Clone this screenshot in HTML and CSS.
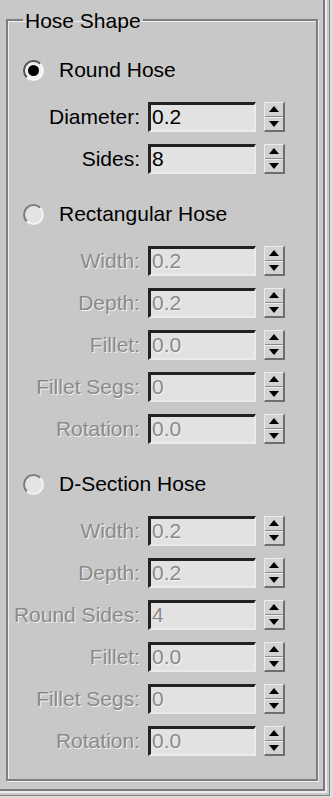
FILE: index.html
```html
<!DOCTYPE html>
<html>
<head>
<meta charset="utf-8">
<link rel="stylesheet" href="styles.css">
</head>
<body>
<div class="screen">
  <div class="frame">
    <div class="rim">
      <div class="panel">
        <fieldset class="group">
          <legend>Hose Shape</legend>
          <div class="group-body">
            <div class="radio-row first"><span class="radio checked"><span class="dot"></span></span><span class="radio-label">Round Hose</span></div>
            <div class="spin-row"><span class="lbl">Diameter:</span><div class="field">0.2</div><div class="spinner"><div class="half up"><svg width="10" height="6" viewBox="0 0 10 6"><polygon points="5,0 10,6 0,6"/></svg></div><div class="half down"><svg width="10" height="6" viewBox="0 0 10 6"><polygon points="0,0 10,0 5,6"/></svg></div></div></div>
            <div class="spin-row"><span class="lbl">Sides:</span><div class="field">8</div><div class="spinner"><div class="half up"><svg width="10" height="6" viewBox="0 0 10 6"><polygon points="5,0 10,6 0,6"/></svg></div><div class="half down"><svg width="10" height="6" viewBox="0 0 10 6"><polygon points="0,0 10,0 5,6"/></svg></div></div></div>

            <div class="radio-row"><span class="radio"></span><span class="radio-label">Rectangular Hose</span></div>
            <div class="spin-row off"><span class="lbl">Width:</span><div class="field">0.2</div><div class="spinner"><div class="half up"><svg width="10" height="6" viewBox="0 0 10 6"><polygon points="5,0 10,6 0,6"/></svg></div><div class="half down"><svg width="10" height="6" viewBox="0 0 10 6"><polygon points="0,0 10,0 5,6"/></svg></div></div></div>
            <div class="spin-row off"><span class="lbl">Depth:</span><div class="field">0.2</div><div class="spinner"><div class="half up"><svg width="10" height="6" viewBox="0 0 10 6"><polygon points="5,0 10,6 0,6"/></svg></div><div class="half down"><svg width="10" height="6" viewBox="0 0 10 6"><polygon points="0,0 10,0 5,6"/></svg></div></div></div>
            <div class="spin-row off"><span class="lbl">Fillet:</span><div class="field">0.0</div><div class="spinner"><div class="half up"><svg width="10" height="6" viewBox="0 0 10 6"><polygon points="5,0 10,6 0,6"/></svg></div><div class="half down"><svg width="10" height="6" viewBox="0 0 10 6"><polygon points="0,0 10,0 5,6"/></svg></div></div></div>
            <div class="spin-row off"><span class="lbl">Fillet Segs:</span><div class="field">0</div><div class="spinner"><div class="half up"><svg width="10" height="6" viewBox="0 0 10 6"><polygon points="5,0 10,6 0,6"/></svg></div><div class="half down"><svg width="10" height="6" viewBox="0 0 10 6"><polygon points="0,0 10,0 5,6"/></svg></div></div></div>
            <div class="spin-row off"><span class="lbl">Rotation:</span><div class="field">0.0</div><div class="spinner"><div class="half up"><svg width="10" height="6" viewBox="0 0 10 6"><polygon points="5,0 10,6 0,6"/></svg></div><div class="half down"><svg width="10" height="6" viewBox="0 0 10 6"><polygon points="0,0 10,0 5,6"/></svg></div></div></div>

            <div class="radio-row"><span class="radio"></span><span class="radio-label">D-Section Hose</span></div>
            <div class="spin-row off"><span class="lbl">Width:</span><div class="field">0.2</div><div class="spinner"><div class="half up"><svg width="10" height="6" viewBox="0 0 10 6"><polygon points="5,0 10,6 0,6"/></svg></div><div class="half down"><svg width="10" height="6" viewBox="0 0 10 6"><polygon points="0,0 10,0 5,6"/></svg></div></div></div>
            <div class="spin-row off"><span class="lbl">Depth:</span><div class="field">0.2</div><div class="spinner"><div class="half up"><svg width="10" height="6" viewBox="0 0 10 6"><polygon points="5,0 10,6 0,6"/></svg></div><div class="half down"><svg width="10" height="6" viewBox="0 0 10 6"><polygon points="0,0 10,0 5,6"/></svg></div></div></div>
            <div class="spin-row off"><span class="lbl">Round Sides:</span><div class="field">4</div><div class="spinner"><div class="half up"><svg width="10" height="6" viewBox="0 0 10 6"><polygon points="5,0 10,6 0,6"/></svg></div><div class="half down"><svg width="10" height="6" viewBox="0 0 10 6"><polygon points="0,0 10,0 5,6"/></svg></div></div></div>
            <div class="spin-row off"><span class="lbl">Fillet:</span><div class="field">0.0</div><div class="spinner"><div class="half up"><svg width="10" height="6" viewBox="0 0 10 6"><polygon points="5,0 10,6 0,6"/></svg></div><div class="half down"><svg width="10" height="6" viewBox="0 0 10 6"><polygon points="0,0 10,0 5,6"/></svg></div></div></div>
            <div class="spin-row off"><span class="lbl">Fillet Segs:</span><div class="field">0</div><div class="spinner"><div class="half up"><svg width="10" height="6" viewBox="0 0 10 6"><polygon points="5,0 10,6 0,6"/></svg></div><div class="half down"><svg width="10" height="6" viewBox="0 0 10 6"><polygon points="0,0 10,0 5,6"/></svg></div></div></div>
            <div class="spin-row off last"><span class="lbl">Rotation:</span><div class="field">0.0</div><div class="spinner"><div class="half up"><svg width="10" height="6" viewBox="0 0 10 6"><polygon points="5,0 10,6 0,6"/></svg></div><div class="half down"><svg width="10" height="6" viewBox="0 0 10 6"><polygon points="0,0 10,0 5,6"/></svg></div></div></div>
          </div>
        </fieldset>
      </div>
    </div>
  </div>
</div>
</body>
</html>
```

FILE: styles.css
```css
html, body {
  margin: 0;
  padding: 0;
  background: #dcdcdc;
}
body {
  font-family: "Liberation Sans", Arial, sans-serif;
  font-size: 21px;
  color: #000;
}
.screen {
  width: 333px;
  height: 798px;
  overflow: hidden;
  background: #dcdcdc;
}
.frame {
  width: 330px;
  box-sizing: border-box;
  padding: 0 2px 2px 0;
  border-right: 1px solid #858585;
  border-bottom: 1px solid #858585;
  background: #c8c8c8;
}
.rim {
  border-right: 2px solid #ececec;
  border-bottom: 2px solid #ececec;
}
.panel {
  width: 323px;
  height: 789px;
  border-right: 2px solid #7a7a7a;
  border-bottom: 2px solid #7a7a7a;
  background: #c8c8c8;
  overflow: hidden;
}
.group {
  margin: 6px 0 0 6px;
  padding: 0;
  width: 312px;
  box-sizing: border-box;
  border: 2px solid #7e7e7e;
  box-shadow: inset 1px 1px 0 #efefef, 1px 1px 0 #efefef;
  min-width: 0;
}
.group legend {
  margin-left: 15px;
  padding: 3px 2px 0 2px;
  line-height: 24px;
  color: #000;
}
.group-body {
  padding: 25px 0 23px 0;
}
.radio-row {
  display: flex;
  align-items: center;
  height: 24px;
  padding-left: 15px;
  margin: 28px 0 20px 0;
}
.radio-row.first {
  margin-top: 0;
}
.radio {
  width: 21px;
  height: 21px;
  box-sizing: border-box;
  border-radius: 50%;
  border: 2px solid;
  border-color: #7c7c7c #f2f2f2 #f2f2f2 #7c7c7c;
  background: #e4e4e4;
  display: flex;
  align-items: center;
  justify-content: center;
  margin-right: 15px;
}
.radio.checked {
  background: #f0f0f0;
  border-color: #555 #f6f6f6 #f6f6f6 #555;
}
.radio .dot {
  width: 11px;
  height: 11px;
  border-radius: 50%;
  background: #000;
}
.radio-label {
  line-height: 24px;
}
.spin-row {
  display: grid;
  grid-template-columns: 132px 108px 21px;
  column-gap: 8px;
  align-items: center;
  height: 30px;
  margin-bottom: 12px;
}
.spin-row.last {
  margin-bottom: 0;
}
.lbl {
  text-align: right;
  white-space: nowrap;
  line-height: 24px;
}
.field {
  height: 30px;
  box-sizing: border-box;
  border-style: solid;
  border-width: 3px 2px 2px 3px;
  border-color: #222 #ebebeb #ebebeb #222;
  background: #e2e2e2;
  padding-left: 1px;
  line-height: 23px;
}
.spinner {
  height: 30px;
  box-sizing: border-box;
  border-style: solid;
  border-width: 1px 2px 2px 1px;
  border-color: #ececec #6e6e6e #6e6e6e #ececec;
  background: #d2d2d2;
  display: flex;
  flex-direction: column;
}
.half {
  flex: 1;
  display: flex;
  align-items: center;
  justify-content: center;
}
.half.up {
  border-bottom: 1px solid #8a8a8a;
}
.half.down {
  border-top: 1px solid #efefef;
}
.half svg polygon {
  fill: #000;
}
.off .lbl,
.off .field {
  color: #8a8a8a;
  text-shadow: 1px 1px 0 #f2f2f2;
}
```
